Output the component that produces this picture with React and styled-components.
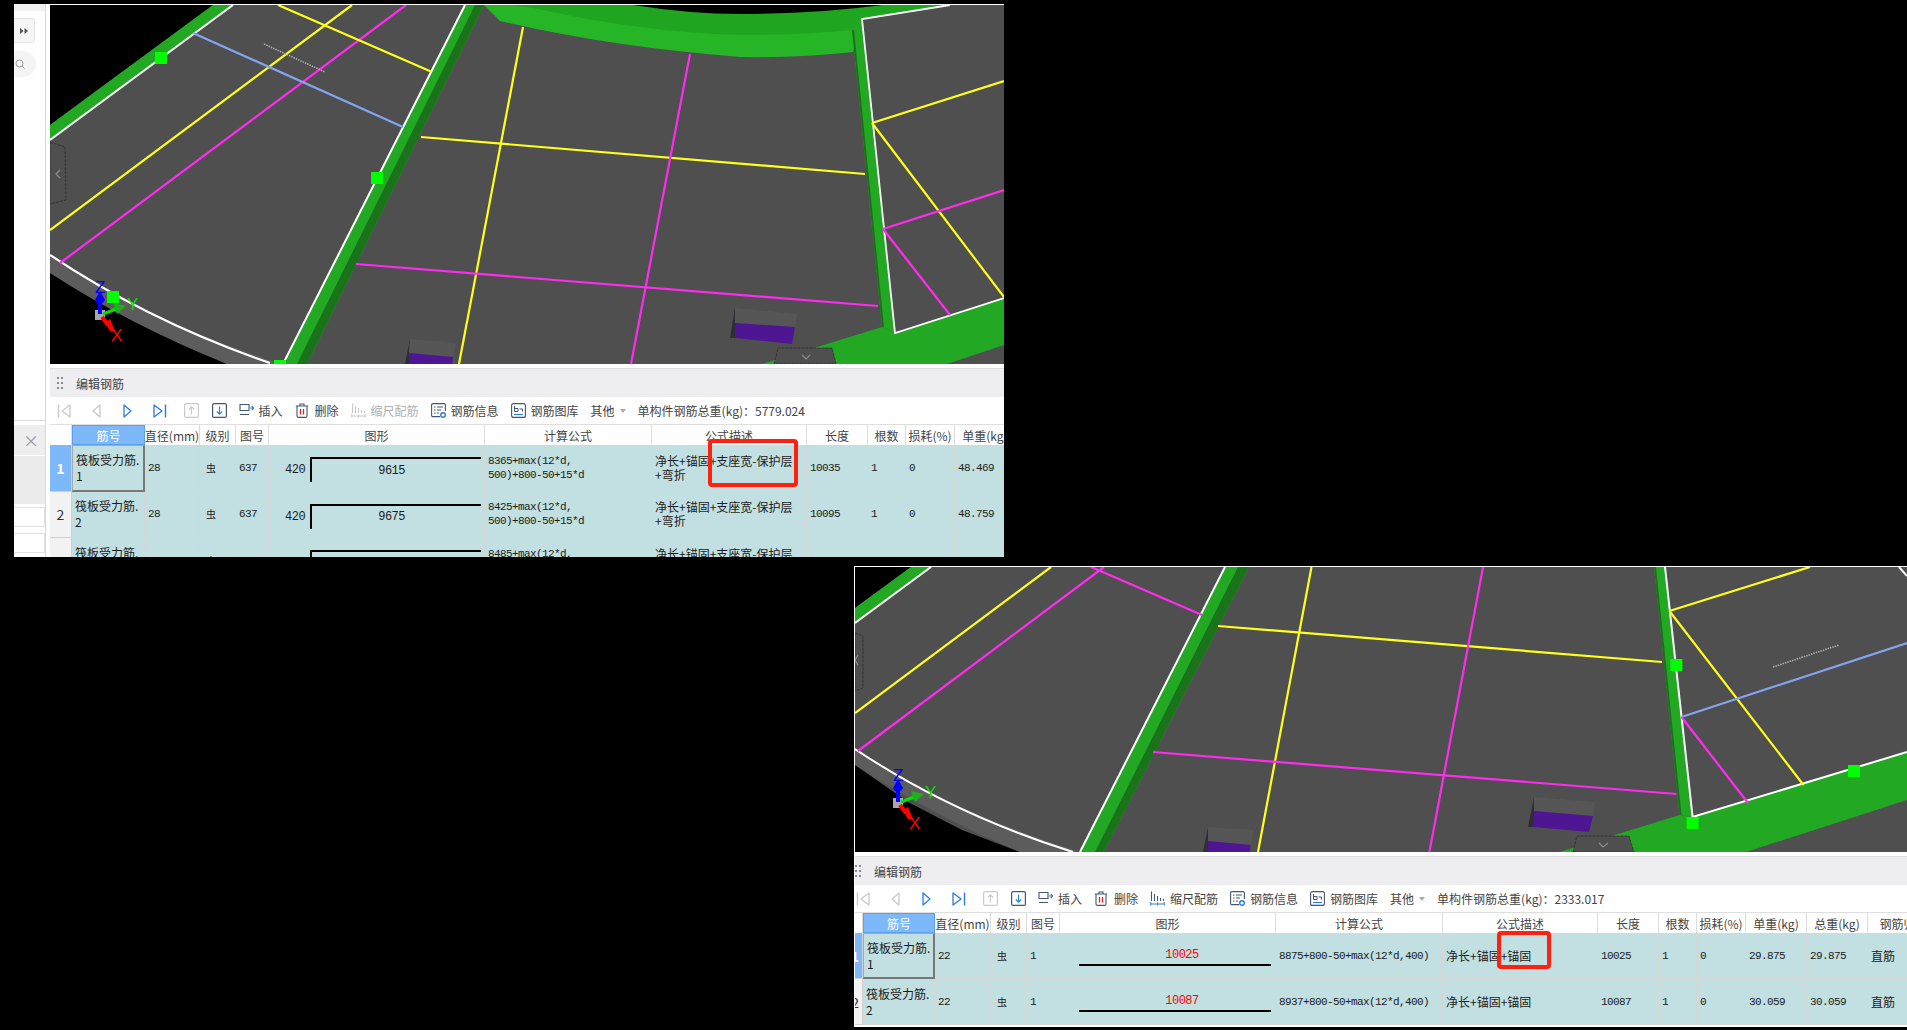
import React from "react";
import styled, { createGlobalStyle } from "styled-components";

const CJK = `"Noto Sans CJK SC", "Liberation Sans", sans-serif`;
const MONO = `"Liberation Mono", "Noto Sans CJK SC", monospace`;

const YELLOW = "#ffff1e";
const MAGENTA = "#ff2cf0";
const BLUE = "#84a4f0";
const SLAB = "#4f4f4f";
const EDGE = "#5c5c5c";
const GREEN = "#22a822";
const GREEN_TOP = "#26b526";
const GREEN_DARK = "#1a731a";
const PURPLE = "#4f1694";

const GlobalStyle = createGlobalStyle`
  html, body {
    margin: 0;
    background: #000;
    overflow: hidden;
  }
  body {
    font-family: ${CJK};
    font-size: 12px;
    color: #333;
  }
`;

const Page = styled.div`
  width: 1907px;
  height: 1030px;
  background: #000;
  overflow: hidden;
`;

const Window = styled.div`
  position: relative;
  display: flex;
  background: #fff;
  overflow: hidden;
  margin: ${(p) => p.$margin};
  width: ${(p) => p.$width}px;
  height: ${(p) => p.$height}px;
`;

const Sidebar = styled.div`
  width: 31px;
  margin-right: 4px;
  flex: none;
  display: flex;
  flex-direction: column;
  border-right: 1px solid #d8d8d8;
`;

const SideStrip = styled.div`
  height: 7px;
  background: #f1f1f1;
`;

const CollapseButton = styled.div`
  width: 21px;
  height: 25px;
  margin-top: 7px;
  display: flex;
  align-items: center;
  justify-content: center;
  background: #f6f6f6;
  border: 1px solid #e2e2e2;
  border-left: 0;
  border-radius: 0 4px 4px 0;
  box-sizing: border-box;
`;

const SearchPill = styled.div`
  width: 22px;
  height: 26px;
  margin-top: 8px;
  display: flex;
  align-items: center;
  padding-left: 1px;
  box-sizing: border-box;
  background: #f4f4f4;
  border-radius: 0 13px 13px 0;
`;

const SideSpacer = styled.div`
  flex: none;
  height: 343px;
  border-bottom: 1px solid #dcdcdc;
`;

const SideClose = styled.div`
  height: 30px;
  margin-top: 4px;
  padding-right: 6px;
  display: flex;
  align-items: center;
  justify-content: flex-end;
  font-size: 16px;
  color: #999;
  background: #eeeeee;
`;

const SideTab = styled.div`
  height: 24px;
  margin-top: ${(p) => p.$top}px;
  background: #ececec;
`;

const SideInput = styled.div`
  height: 20px;
  margin-top: ${(p) => p.$top}px;
  background: #fff;
  border: 1px solid #e2e2e2;
  border-left: 0;
  box-sizing: border-box;
`;

const Main = styled.div`
  flex: 1;
  min-width: 0;
  display: flex;
  flex-direction: column;
  border-left: ${(p) => (p.$edge ? "1px solid #fff" : "0")};
`;

const SceneFrame = styled.svg`
  display: block;
  flex: none;
  width: 100%;
  height: ${(p) => p.$height}px;
  margin-top: 1px;
  background: #000;
`;

const Panel = styled.div`
  margin-top: 4px;
  border-top: 1px solid #dedede;
  flex: 1;
  min-height: 0;
  display: flex;
  flex-direction: column;
`;

const TitleBar = styled.div`
  height: 28px;
  flex: none;
  display: flex;
  align-items: center;
  gap: 13px;
  padding-left: ${(p) => p.$pad}px;
  background: #eeeef0;
  color: #444;
`;

const Grip = styled.div`
  display: grid;
  grid-template-columns: repeat(2, 2px);
  gap: 3px 2px;
  span {
    width: 2px;
    height: 2px;
    background: #8a8a8a;
  }
`;

const Toolbar = styled.div`
  height: 27px;
  flex: none;
  display: flex;
  align-items: center;
  gap: 12px;
  padding-left: ${(p) => p.$pad}px;
  border-bottom: 1px solid #dedede;
  white-space: nowrap;
  color: #444;
`;

const NavGroup = styled.div`
  display: flex;
  align-items: center;
  gap: ${(p) => p.$gap}px;
`;

const ToolItem = styled.div`
  display: flex;
  align-items: center;
  gap: 5px;
  color: ${(p) => (p.$disabled ? "#b0b0b0" : "#444")};
`;

const Caret = styled.span`
  width: 0;
  height: 0;
  border: 3px solid transparent;
  border-top: 4px solid #aaa;
  border-bottom: 0;
`;

const Table = styled.div`
  flex: 1;
  min-height: 0;
  overflow: hidden;
`;

const Row = styled.div`
  display: grid;
  grid-template-columns: ${(p) => p.$columns};
  height: ${(p) => p.$height}px;
`;

const HeadCell = styled.div`
  display: flex;
  align-items: center;
  justify-content: center;
  white-space: nowrap;
  color: #444;
  border-right: 1px solid #dddddd;
  box-sizing: border-box;
  background: ${(p) => (p.$active ? "#7db8fa" : "#fff")};
  ${(p) => p.$active && "color: #fff; border: 1px solid #5d9fe8;"}
`;

const RowHead = styled.div`
  display: flex;
  align-items: center;
  justify-content: ${(p) => (p.$clipped ? "flex-end" : "center")};
  padding-right: ${(p) => (p.$clipped ? 3 : 0)}px;
  overflow: hidden;
  font-size: 14px;
  box-sizing: border-box;
  border-bottom: 1px solid #d0d0d0;
  border-right: 1px solid #d0d0d0;
  background: ${(p) => (p.$active ? "#7db8fa" : "#f2f2f2")};
  color: ${(p) => (p.$active ? "#fff" : "#333")};
  font-weight: ${(p) => (p.$active ? 700 : 400)};
`;

const Cell = styled.div`
  display: flex;
  align-items: center;
  min-width: 0;
  padding: 0 3px;
  box-sizing: border-box;
  white-space: pre-line;
  line-height: 14px;
  color: #1c1c1c;
  background: #c2dfe1;
  border-right: 1px solid #d6d6d6;
  border-bottom: 1px solid #d6d6d6;
  font-family: ${(p) => (p.$mono ? MONO : CJK)};
  font-size: ${(p) => (p.$mono ? "11px" : "12px")};
  letter-spacing: ${(p) => (p.$mono ? "-0.6px" : "0")};
`;

const MarkCell = styled(Cell)`
  white-space: pre;
  line-height: 16px;
  ${(p) =>
    p.$selected &&
    `
    border: 1px solid #a8a8a8;
    border-right: 2px solid #777;
    border-bottom: 2px solid #777;
  `}
`;

const GradeCell = styled(Cell)`
  padding-left: 6px;
  font-size: 10px;
`;

const BentShapeCell = styled(Cell)`
  padding: 12px 0 0 16px;
  align-items: flex-start;
  gap: 5px;
  font-family: ${MONO};
  font-size: 12px;
  letter-spacing: -0.5px;
`;

const BentLength = styled.span`
  line-height: 26px;
`;

const BentBar = styled.div`
  width: 171px;
  height: 25px;
  display: flex;
  align-items: center;
  justify-content: center;
  padding-right: 10px;
  box-sizing: border-box;
  border-top: 2px solid #000;
  border-left: 2px solid #000;
`;

const StraightShapeCell = styled(Cell)`
  display: block;
  padding: 16px 4px 0 19px;
`;

const StraightBar = styled.div`
  height: 15px;
  padding-left: 14px;
  text-align: center;
  font-family: ${MONO};
  font-size: 12px;
  letter-spacing: -0.5px;
  line-height: 12px;
  color: #ff0000;
  border-bottom: 2px solid #000;
`;

const Highlight = styled.div`
  position: absolute;
  box-sizing: border-box;
  left: ${(p) => p.$left}px;
  top: ${(p) => p.$top}px;
  width: ${(p) => p.$width}px;
  height: ${(p) => p.$height}px;
  border: 4px solid #ff2010;
  border-radius: 4px;
`;

const Wire = ({ color, from, to, width = 2.2 }) => (
  <line x1={from[0]} y1={from[1]} x2={to[0]} y2={to[1]} stroke={color} strokeWidth={width} />
);

const Handle = ({ x, y }) => <rect x={x - 6} y={y - 6} width="12" height="12" fill="#00ff00" />;

const Tab = ({ points, chevron }) => (
  <>
    <polygon points={points} fill={SLAB} stroke="#222" strokeWidth="0.6" strokeDasharray="3 1" />
    <polyline points={chevron} fill="none" stroke="#8c8c8c" strokeWidth="1.2" />
  </>
);

const Gizmo = ({ x, y }) => (
  <g transform={`translate(${x} ${y})`} fontFamily='"Liberation Sans", sans-serif' fontSize="17">
    <rect x="-5" y="-4" width="10" height="10" fill="#a8a8a8" />
    <line x1="0" y1="0" x2="0" y2="-14" stroke="#0000ff" strokeWidth="4" />
    <polygon points="-5,-14 0,-23 5,-14 3,-11 -3,-11" fill="#0000ff" />
    <text x="-5" y="-21" fill="#0000ff">Z</text>
    <line x1="3" y1="0" x2="16" y2="-5" stroke="#00e000" strokeWidth="3" />
    <polygon points="13,-11 26,-8 17,0" fill="#1fae1f" />
    <text x="27" y="-4" fill="#00e000">Y</text>
    <line x1="2" y1="3" x2="8" y2="11" stroke="#ff0000" strokeWidth="4" />
    <polygon points="5,9 10,5 15,17 10,17" fill="#ff0000" />
    <text x="11" y="27" fill="#ff0000">X</text>
  </g>
);

const Pit = ({ top, pit, side }) => (
  <>
    <polygon points={side} fill="#2e2e36" />
    <polygon points={top} fill="#565656" />
    <polygon points={pit} fill={PURPLE} />
  </>
);

const SceneLeft = () => (
  <SceneFrame $height={359} viewBox="50 5 954 359">
    <polygon points="50,125 213,5 1004,5 1004,364 50,364" fill={SLAB} />
    <polygon points="50,273 133,320 227,364 50,364" fill="#000" />
    <path d="M50 255 Q155 325 283 364 L227 364 Q130 325 50 273 Z" fill={EDGE} />
    <path d="M50 255 Q150 322 270 363" fill="none" stroke="#fff" strokeWidth="2.2" />

    <polygon points="50,125 213,5 233,5 50,140" fill={GREEN} />
    <line x1="50" y1="140" x2="233" y2="5" stroke="#fff" strokeWidth="2" />

    <path d="M484 5 L500 21 Q610 47 740 57 Q800 58 853 52 L862 19 L950 5 Z" fill={GREEN_TOP} />
    <path d="M510 5 L633 5 Q680 12 740 14 Q820 12 883 5 L950 5 L862 19 L852 30 Q800 35 740 35 Q640 32 533 8 Z" fill="#20a520" />
    <path d="M633 5 Q690 14 740 14 Q815 14 883 5 Z" fill="#000" />

    <polygon points="465,5 484,5 307,364 283,364" fill={GREEN} />
    <polygon points="475,5 484,5 307,364 297,364" fill={GREEN_DARK} />
    <line x1="465" y1="5" x2="283" y2="364" stroke="#fff" strokeWidth="2" />

    <polygon points="852,30 862,19 895,333 882,327" fill={GREEN} />
    <polygon points="852,30 854,30 884,327 882,327" fill={GREEN_DARK} />
    <polygon points="862,19 950,5 1004,5 1004,298 895,333" fill={SLAB} />
    <polygon points="762,364 882,327 895,333 1004,298 1004,345 947,364" fill={GREEN} />
    <polyline points="950,5 862,19 895,333 1004,298" fill="none" stroke="#fff" strokeWidth="1.8" />

    <Wire color={YELLOW} from={[50, 230]} to={[352, 5]} />
    <Wire color={MAGENTA} from={[60, 263]} to={[406, 5]} />
    <Wire color={YELLOW} from={[278, 5]} to={[432, 72]} />
    <Wire color={BLUE} from={[193, 33]} to={[403, 127]} />
    <Wire color={YELLOW} from={[421, 137]} to={[865, 174]} />
    <Wire color={YELLOW} from={[523, 27]} to={[459, 364]} />
    <Wire color={MAGENTA} from={[356, 264]} to={[878, 306]} />
    <Wire color={MAGENTA} from={[690, 54]} to={[631, 364]} />
    <Wire color={YELLOW} from={[872, 123]} to={[1004, 81]} />
    <Wire color={YELLOW} from={[872, 123]} to={[1004, 297]} />
    <Wire color={MAGENTA} from={[883, 229]} to={[1004, 190]} />
    <Wire color={MAGENTA} from={[883, 229]} to={[950, 315]} />
    <line x1="264" y1="44" x2="325" y2="72" stroke="#aaa" strokeWidth="1.6" strokeDasharray="1.5 1" />

    <Pit top="410,339 456,343 453,357 409,353" pit="409,353 453,357 452,364 409,364" side="410,339 405,364 409,364" />
    <Pit top="735,308 797,314 795,327 735,323" pit="735,323 795,327 792,344 735,338" side="735,308 730,338 735,338" />

    <Handle x={161} y={58} />
    <Handle x={377} y={178} />
    <Handle x={113} y={297} />
    <Handle x={280} y={366} />
    <Tab points="50,142 65,147 66,200 50,204" chevron="60,170 56,174 60,178" />
    <Tab points="774,364 778,348 832,348 836,364" chevron="802,355 806,359 810,355" />
    <Gizmo x={100} y={314} />
  </SceneFrame>
);

const SceneRight = () => (
  <SceneFrame $height={285} viewBox="855 567 1052 285">
    <polygon points="855,608 911,567 1907,567 1907,852 855,852" fill={SLAB} />
    <polygon points="855,765 908,802 962,830 1020,852 855,852" fill="#000" />
    <path d="M855 749 Q952 812 1080 852 L1020 852 Q932 815 855 765 Z" fill={EDGE} />
    <path d="M855 749 Q952 814 1073 852" fill="none" stroke="#fff" strokeWidth="2" />

    <polygon points="855,608 911,567 931,567 855,623" fill={GREEN} />
    <line x1="855" y1="623" x2="931" y2="567" stroke="#fff" strokeWidth="2" />

    <polygon points="1225,567 1249,567 1104,852 1080,852" fill={GREEN} />
    <polygon points="1238,567 1249,567 1104,852 1095,852" fill={GREEN_DARK} />
    <line x1="1225" y1="567" x2="1080" y2="852" stroke="#fff" strokeWidth="2" />

    <polygon points="1654,567 1665,567 1692.6,817 1679.5,815" fill={GREEN} />
    <polygon points="1654,567 1656,567 1681.5,815 1679.5,815" fill={GREEN_DARK} />
    <polygon points="1559.5,852 1679.5,815 1692.6,817 1907,752 1907,800 1746,852" fill={GREEN} />
    <polyline points="1665,567 1692.6,817 1907,752" fill="none" stroke="#fff" strokeWidth="2" />
    <line x1="1899" y1="567" x2="1907" y2="576" stroke="#fff" strokeWidth="2" />

    <Wire color={YELLOW} from={[855, 713]} to={[1051, 567]} />
    <Wire color={MAGENTA} from={[858, 751]} to={[1104, 567]} />
    <Wire color={MAGENTA} from={[1091, 567]} to={[1202, 615]} />
    <Wire color={YELLOW} from={[1218, 626]} to={[1662, 662]} />
    <Wire color={YELLOW} from={[1311.5, 567]} to={[1258, 852]} />
    <Wire color={MAGENTA} from={[1153, 752]} to={[1676.5, 794]} />
    <Wire color={MAGENTA} from={[1483, 567]} to={[1429.4, 852]} />
    <Wire color={YELLOW} from={[1669.4, 611]} to={[1810, 567]} />
    <Wire color={YELLOW} from={[1669.4, 611]} to={[1803.5, 785]} />
    <Wire color={BLUE} from={[1681.5, 717]} to={[1907, 643]} />
    <Wire color={MAGENTA} from={[1681.5, 717]} to={[1748, 803]} />
    <line x1="1773" y1="667" x2="1839" y2="645" stroke="#aaa" strokeWidth="1.6" strokeDasharray="1.5 1" />

    <Pit top="1208,827 1254,830 1250.6,845 1208,841" pit="1208,841 1250.6,845 1250,852 1208,852" side="1208,827 1203,852 1208,852" />
    <Pit top="1534,797 1595,802 1593,816 1534,811" pit="1534,811 1593,816 1589,832 1534,827" side="1534,797 1528,827 1534,827" />

    <Handle x={1676.4} y={665} />
    <Handle x={1692.6} y={823} />
    <Handle x={1854} y={771} />
    <Tab points="855,633 863,636 863,688 855,691" chevron="858,655 855,660 858,665" />
    <Tab points="1573,852 1577,836 1629,836 1634,852" chevron="1599,843 1603,847 1608,843" />
    <Gizmo x={898} y={802} />
  </SceneFrame>
);

const ICON_DARK = "#46566e";
const ICON_BLUE = "#2a7de1";
const ICON_OFF = "#c9c9c9";

const Glyph = ({ width = 15, height = 15, children }) => (
  <svg width={width} height={height} viewBox={`0 0 ${width} ${height}`} fill="none" style={{ flex: "none", display: "block" }}>
    {children}
  </svg>
);

const NavIcon = ({ dir, bar, color }) => (
  <Glyph width={16} height={16}>
    <path
      d={dir === "left" ? (bar ? "M14 2 L6 8 L14 14 Z" : "M12 2 L5 8 L12 14 Z") : bar ? "M2 2 L10 8 L2 14 Z" : "M4 2 L11 8 L4 14 Z"}
      stroke={color}
      strokeWidth="1.3"
      strokeLinejoin="round"
    />
    {bar && <path d={dir === "left" ? "M2.5 1.5 V14.5" : "M13.5 1.5 V14.5"} stroke={color} strokeWidth="1.4" />}
  </Glyph>
);

const MoveIcon = ({ up, frame, arrow }) => (
  <Glyph>
    <rect x="0.6" y="0.6" width="13.8" height="13.8" rx="1.5" stroke={frame} strokeWidth="1.2" />
    <path d={up ? "M7.5 11.5 V4 M4.8 6.5 L7.5 3.8 L10.2 6.5" : "M7.5 3.5 V11 M4.8 8.5 L7.5 11.2 L10.2 8.5"} stroke={arrow} strokeWidth="1.1" />
  </Glyph>
);

const InsertIcon = () => (
  <Glyph>
    <path d="M1 1.5 H10 V7.5 H1 Z M1 11.5 H10" stroke={ICON_DARK} strokeWidth="1.1" />
    <path d="M11 5 H14.5 M12.8 3 L14.8 5 L12.8 7" stroke={ICON_BLUE} strokeWidth="1.1" />
  </Glyph>
);

const TrashIcon = () => (
  <Glyph>
    <path d="M0.8 3 H13.2 M5 3 V1 H9 V3 M2 3 V13 Q2 14.4 3.4 14.4 H10.6 Q12 14.4 12 13 V3" stroke={ICON_DARK} strokeWidth="1.1" />
    <path d="M5.5 6 V11.5 M8.5 6 V11.5" stroke="#e02020" strokeWidth="1.3" />
  </Glyph>
);

const ScaleIcon = ({ disabled }) => {
  const bars = disabled ? ICON_OFF : ICON_DARK;
  const base = disabled ? ICON_OFF : ICON_BLUE;
  return (
    <Glyph>
      <path d="M1.5 0.5 V10 M4.5 3 V10 M7.5 5 V10 M10.5 7 V10 M13.5 8 V10" stroke={bars} strokeWidth="1.1" />
      <path d="M0.5 13 H14.5 M0.8 11 V14.5 M7.5 11.5 V14.5 M14.2 11 V14.5" stroke={base} strokeWidth="1" />
    </Glyph>
  );
};

const InfoIcon = () => (
  <Glyph>
    <path d="M9 13.6 H2 Q0.6 13.6 0.6 12.2 V2 Q0.6 0.6 2 0.6 H13 Q14.4 0.6 14.4 2 V8" stroke={ICON_DARK} strokeWidth="1.1" />
    <path d="M3 4 H4.5 M6 4 H12 M3 7 H4.5 M6 7 H10 M3 10 H4.5 M6 10 H8" stroke={ICON_DARK} strokeWidth="1" />
    <circle cx="12" cy="12" r="2.3" stroke={ICON_BLUE} strokeWidth="1.4" />
  </Glyph>
);

const LibraryIcon = () => (
  <Glyph>
    <rect x="0.6" y="0.6" width="13.8" height="13.8" rx="2" stroke={ICON_DARK} strokeWidth="1.1" />
    <path d="M3.5 3 V8.5 H7 M3.5 5.5 H7 V8.5 M8.5 6 H11.5 V8.5" stroke={ICON_DARK} strokeWidth="1" />
    <path d="M3 11.5 H12" stroke={ICON_BLUE} strokeWidth="1.1" />
  </Glyph>
);

const SearchGlyph = () => (
  <svg width="10" height="10" viewBox="0 0 10 10" fill="none">
    <circle cx="4.5" cy="4.5" r="3.5" stroke="#9a9a9a" strokeWidth="1" />
    <path d="M7 7 L9.5 9.5" stroke="#9a9a9a" strokeWidth="1" />
  </svg>
);

const DoubleArrow = () => (
  <svg width="8" height="6" viewBox="0 0 8 6">
    <path d="M0 0 L3.5 3 L0 6 Z M4.5 0 L8 3 L4.5 6 Z" fill="#555" />
  </svg>
);

const GripDots = () => (
  <Grip>
    {[0, 1, 2, 3, 4, 5].map((n) => (
      <span key={n} />
    ))}
  </Grip>
);

const RebarToolbar = ({ pad, scaleDisabled, total }) => (
  <Toolbar $pad={pad}>
    <NavGroup $gap={16}>
      <NavIcon dir="left" bar color={ICON_OFF} />
      <NavIcon dir="left" color={ICON_OFF} />
      <NavIcon dir="right" color={ICON_BLUE} />
      <NavIcon dir="right" bar color={ICON_BLUE} />
      <NavGroup $gap={13}>
        <MoveIcon up frame={ICON_OFF} arrow={ICON_OFF} />
        <MoveIcon frame={ICON_DARK} arrow={ICON_BLUE} />
      </NavGroup>
    </NavGroup>
    <ToolItem>
      <InsertIcon />
      插入
    </ToolItem>
    <ToolItem>
      <TrashIcon />
      删除
    </ToolItem>
    <ToolItem $disabled={scaleDisabled}>
      <ScaleIcon disabled={scaleDisabled} />
      缩尺配筋
    </ToolItem>
    <ToolItem>
      <InfoIcon />
      钢筋信息
    </ToolItem>
    <ToolItem>
      <LibraryIcon />
      钢筋图库
    </ToolItem>
    <ToolItem>
      其他
      <Caret />
    </ToolItem>
    <ToolItem>单构件钢筋总重(kg)：{total}</ToolItem>
  </Toolbar>
);

const HEADERS = ["筋号", "直径(mm)", "级别", "图号", "图形", "计算公式", "公式描述", "长度", "根数", "损耗(%)", "单重(kg)"];

const LEFT_COLUMNS = "22px 73px 55px 36px 33px 216px 167px 155px 61px 38px 49px 61px";
const RIGHT_COLUMNS = "8px 72px 56px 36px 33px 216px 167px 155px 61px 38px 49px 61px 61px 72px";

const LEFT_ROWS = [
  { no: 1, dia: 28, fig: 637, hook: 420, run: 9615, formula: "8365+max(12*d,\n500)+800-50+15*d", len: 10035, weight: "48.469" },
  { no: 2, dia: 28, fig: 637, hook: 420, run: 9675, formula: "8425+max(12*d,\n500)+800-50+15*d", len: 10095, weight: "48.759" },
  { no: 3, dia: 28, fig: 637, hook: 420, run: 9735, formula: "8485+max(12*d,\n500)+800-50+15*d", len: 10155, weight: "49.049" },
];

const RIGHT_ROWS = [
  { no: 1, dia: 22, fig: 1, run: 10025, formula: "8875+800-50+max(12*d,400)", len: 10025, weight: "29.875" },
  { no: 2, dia: 22, fig: 1, run: 10087, formula: "8937+800-50+max(12*d,400)", len: 10087, weight: "30.059" },
];

const HeaderRow = ({ columns, extra = [] }) => (
  <Row $columns={columns} $height={20}>
    <HeadCell />
    {[...HEADERS, ...extra].map((label, i) => (
      <HeadCell key={label} $active={i === 0}>
        {label}
      </HeadCell>
    ))}
  </Row>
);

const App = () => (
  <Page>
    <GlobalStyle />
    <Window $margin="4px 0 0 14px" $width={990} $height={553}>
      <Sidebar>
        <SideStrip />
        <CollapseButton>
          <DoubleArrow />
        </CollapseButton>
        <SearchPill>
          <SearchGlyph />
        </SearchPill>
        <SideSpacer />
        <SideClose>×</SideClose>
        <SideTab $top={1} />
        <SideTab $top={0} />
        <SideInput $top={3} />
        <SideInput $top={6} />
      </Sidebar>
      <Main>
        <SceneLeft />
        <Panel>
          <TitleBar $pad={7}>
            <GripDots />
            编辑钢筋
          </TitleBar>
          <RebarToolbar pad={5.5} scaleDisabled total="5779.024" />
          <Table>
            <HeaderRow columns={LEFT_COLUMNS} />
            {LEFT_ROWS.map((row, i) => (
              <Row key={row.no} $columns={LEFT_COLUMNS} $height={46.5}>
                <RowHead $active={i === 0}>{row.no}</RowHead>
                <MarkCell $selected={i === 0}>{`筏板受力筋.\n${row.no}`}</MarkCell>
                <Cell $mono>{row.dia}</Cell>
                <GradeCell>虫</GradeCell>
                <Cell $mono>{row.fig}</Cell>
                <BentShapeCell>
                  <BentLength>{row.hook}</BentLength>
                  <BentBar>{row.run}</BentBar>
                </BentShapeCell>
                <Cell $mono>{row.formula}</Cell>
                <Cell>{"净长+锚固+支座宽-保护层\n+弯折"}</Cell>
                <Cell $mono>{row.len}</Cell>
                <Cell $mono>1</Cell>
                <Cell $mono>0</Cell>
                <Cell $mono>{row.weight}</Cell>
              </Row>
            ))}
          </Table>
        </Panel>
      </Main>
      <Highlight $left={694} $top={435} $width={90} $height={48} />
    </Window>

    <Window $margin="9px 0 0 854px" $width={1053} $height={461}>
      <Main $edge>
        <SceneRight />
        <Panel>
          <TitleBar $pad={0}>
            <GripDots />
            编辑钢筋
          </TitleBar>
          <RebarToolbar pad={0} total="2333.017" />
          <Table>
            <HeaderRow columns={RIGHT_COLUMNS} extra={["总重(kg)", "钢筋归类"]} />
            {RIGHT_ROWS.map((row, i) => (
              <Row key={row.no} $columns={RIGHT_COLUMNS} $height={46}>
                <RowHead $active={i === 0} $clipped>
                  {row.no}
                </RowHead>
                <MarkCell $selected={i === 0}>{`筏板受力筋.\n${row.no}`}</MarkCell>
                <Cell $mono>{row.dia}</Cell>
                <GradeCell>虫</GradeCell>
                <Cell $mono>{row.fig}</Cell>
                <StraightShapeCell>
                  <StraightBar>{row.run}</StraightBar>
                </StraightShapeCell>
                <Cell $mono>{row.formula}</Cell>
                <Cell>净长+锚固+锚固</Cell>
                <Cell $mono>{row.len}</Cell>
                <Cell $mono>1</Cell>
                <Cell $mono>0</Cell>
                <Cell $mono>{row.weight}</Cell>
                <Cell $mono>{row.weight}</Cell>
                <Cell>直筋</Cell>
              </Row>
            ))}
          </Table>
        </Panel>
      </Main>
      <Highlight $left={643} $top={365} $width={54} $height={38} />
    </Window>
  </Page>
);

export default App;
